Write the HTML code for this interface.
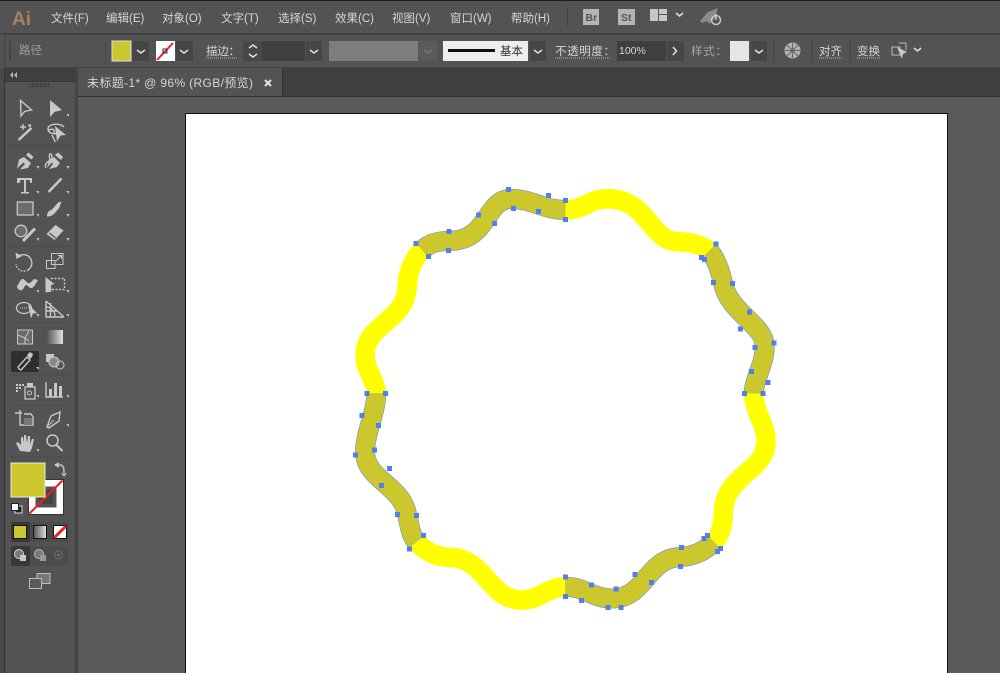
<!DOCTYPE html>
<html><head><meta charset="utf-8"><style>
html,body{margin:0;padding:0;background:#535353;width:1000px;height:673px;overflow:hidden}
svg{display:block}
text{font-family:"Liberation Sans","Noto Sans CJK SC",sans-serif;font-size:11.5px;fill:#d6d6d6}
.i{fill:none;stroke:#c8c8c8;stroke-width:1.4}
.f{fill:#c8c8c8}
.c{fill:none;stroke:#e0e0e0;stroke-width:1.5}
.u{stroke:#b5b5b5;stroke-width:1;stroke-dasharray:1 1}
</style></head><body>
<svg width="1000" height="673" viewBox="0 0 1000 673" xmlns="http://www.w3.org/2000/svg">
<rect width="1000" height="673" fill="#535353"/>
<rect width="1000" height="1" fill="#1c1c1c"/>
<rect x="0" y="33" width="1000" height="1" fill="#3e3e3e"/>
<rect x="4" y="34" width="996" height="1" fill="#444"/>
<rect x="4" y="67" width="996" height="1" fill="#444"/>
<rect x="4" y="34" width="1" height="34" fill="#444"/>

<!-- menu -->
<text x="12" y="25" style="font-size:19px;font-weight:bold;fill:#a87f60">Ai</text>
<text x="51" y="22">文件(F)</text><text x="106" y="22">编辑(E)</text><text x="162" y="22">对象(O)</text>
<text x="221" y="22">文字(T)</text><text x="278" y="22">选择(S)</text><text x="335" y="22">效果(C)</text>
<text x="392" y="22">视图(V)</text><text x="450" y="22">窗口(W)</text><text x="511" y="22">帮助(H)</text>
<rect x="567" y="7" width="1" height="19" fill="#444"/>
<rect x="583" y="9" width="16" height="16" fill="#b4b4b4"/><text x="585.500" y="21" style="font-size:10.500px;font-weight:bold;fill:#555">Br</text>
<rect x="618" y="9" width="17" height="16" fill="#b4b4b4"/><text x="621" y="21" style="font-size:10.500px;font-weight:bold;fill:#555">St</text>
<path class="f" d="M650 9h8v12h-8zM659 9h8v5h-8zM659 15h8v6h-8z"/>
<path class="c" d="M676 13l3.500 3 3.500-3"/>
<path fill="#8a8a8a" d="M700 21l8-9 10-4-3 10-6 6-2-3-5 2z"/>
<circle cx="716" cy="20" r="4.500" fill="none" stroke="#c9c9c9" stroke-width="1.500"/><path d="M716 14v6" stroke="#c9c9c9" stroke-width="1.500"/>

<!-- control bar -->
<rect x="9" y="41" width="2" height="20" fill="#444"/>
<text x="19" y="54" style="fill:#9c9c9c">路径</text>
<rect x="105" y="39" width="1" height="24" fill="#4a4a4a"/>
<rect x="112" y="41" width="19" height="20" fill="#cbc72d" stroke="#ddd" stroke-width="1"/>
<rect x="132" y="41" width="17" height="20" fill="#464646"/><path class="c" d="M137 50l4 3 4-3"/>
<rect x="156" y="41" width="19" height="20" fill="#fff"/><path d="M157 60L173 43" stroke="#e8242a" stroke-width="2"/><rect x="163" y="49" width="4" height="4" fill="none" stroke="#333"/>
<rect x="176" y="41" width="17" height="20" fill="#464646"/><path class="c" d="M180 50l4 3 4-3"/>
<text x="206" y="55" textLength="34">描边：</text><path class="u" d="M206 58h32"/>
<rect x="243" y="41" width="19" height="20" fill="#484848"/><path class="c" d="M249 48l4-3 4 3M249 54l4 3 4-3"/>
<rect x="262" y="41" width="43" height="20" fill="#3f3f3f"/>
<rect x="306" y="41" width="16" height="20" fill="#464646"/><path class="c" d="M310 50l4 3 4-3"/>
<rect x="329" y="41" width="89" height="20" fill="#7d7d7d"/>
<rect x="418" y="41" width="19" height="20" fill="#5a5a5a"/><path d="M424 50l4 3 4-3" fill="none" stroke="#777" stroke-width="1.500"/>
<rect x="443" y="41" width="85" height="20" fill="#eeeeee"/><rect x="448" y="49" width="47" height="3" fill="#111"/>
<text x="500" y="55" style="fill:#333">基本</text>
<rect x="530" y="41" width="16" height="20" fill="#464646"/><path class="c" d="M534 50l4 3 4-3"/>
<text x="555" y="55" textLength="60">不透明度：</text><path class="u" d="M555 58h56"/>
<rect x="617" y="41" width="49" height="20" fill="#3f3f3f"/><text x="619" y="54" style="font-size:10.500px">100%</text>
<rect x="667" y="41" width="17" height="20" fill="#464646"/><path class="c" d="M673 47l3.500 4-3.500 4"/>
<text x="691" y="55" textLength="36" style="fill:#a5a5a5">样式：</text>
<rect x="730" y="41" width="19" height="20" fill="#e6e6e6"/>
<rect x="751" y="41" width="16" height="20" fill="#464646"/><path class="c" d="M755 50l4 3 4-3"/>
<rect x="773" y="39" width="2" height="24" fill="#4a4a4a"/>
<circle cx="792.500" cy="50.500" r="8" fill="#b0b0b0"/><circle cx="792.500" cy="50.500" r="2" fill="#555"/><path d="M792.500 43v15M785 50.500h15M787 45l11 11M798 45l-11 11" stroke="#666" stroke-width="1"/>
<rect x="811" y="39" width="2" height="24" fill="#4a4a4a"/>
<text x="819" y="55">对齐</text><path class="u" d="M819 58h24"/>
<rect x="849" y="39" width="2" height="24" fill="#4a4a4a"/>
<text x="857" y="55">变换</text><path class="u" d="M857 58h24"/>
<path d="M892 47h8v8h-8zM899 43h7v7" fill="none" stroke="#bbb"/><path class="f" d="M897 47l10 5-4 2-1 5z"/>
<path class="c" d="M914 48l3.500 3 3.500-3"/>

<!-- tab bar -->
<rect x="4" y="68" width="996" height="29" fill="#3f3f3f"/>
<rect x="78" y="68" width="204" height="29" fill="#535353"/>
<rect x="282" y="68" width="1" height="29" fill="#333"/>
<text x="87" y="87" textLength="166" style="font-size:12px">未标题-1* @ 96% (RGB/预览)</text>
<path d="M265 80l6 6M271 80l-6 6" stroke="#e6e6e6" stroke-width="2"/>
<rect x="78" y="96" width="922" height="1" fill="#333"/>

<!-- canvas -->
<rect x="78" y="97" width="922" height="576" fill="#5a5a5a"/>
<rect x="185.500" y="113.500" width="762" height="565" fill="#fff" stroke="#111"/>

<!-- tool panel -->
<rect x="0" y="68" width="4" height="605" fill="#4a4a4a"/>
<rect x="4" y="68" width="1" height="605" fill="#333"/>
<rect x="5" y="68" width="70" height="605" fill="#535353"/>
<rect x="5" y="68" width="70" height="13" fill="#3f3f3f"/>
<rect x="5" y="81" width="70" height="1" fill="#383838"/>
<rect x="75" y="68" width="3" height="605" fill="#444"/>
<path d="M13 72l-3 3 3 3zM17 72l-3 3 3 3z" fill="#bbb"/>
<path d="M30 85h19" stroke="#3c3c3c" stroke-width="4" stroke-dasharray="1 1"/>
<path d="M10 146h60M10 246h60M10 323h60M10 375h60M10 405h60M10 457h60" stroke="#484848"/>

<!-- tools -->
<path class="i" d="M20.500 100.500l.5 15.500 3.500-4.500 7-1.500z"/>
<path class="f" d="M50 100v17l4.500-5 7.500-2z"/>
<path d="M18.500 140L31.500 128" stroke="#c8c8c8" stroke-width="2.500"/><path class="i" d="M23 124v6M20 127h6M30 124v3M28 125.500h3" stroke-width="1"/>
<path class="i" d="M64 127c-3-4-16-4-16 2 0 4 6 6 9 4M49 130c4-2 6 0 5 3M52 135c1 3 3 5 3 7" stroke-width="1.200"/><path class="f" d="M55 126l11 9-5.500.5-3.500 6z"/>

<path class="f" d="M17 168.500l2-9 5-2.500 7 6-3 5-8 1.500 5-5.500-1.500-1.500z"/><path class="f" d="M26 155l2.500-2.500 5 4.500-2 2.500z"/>
<path class="i" d="M46 168c-2-3 1-6 3-7 2-2-1-6 1-7 2-1 2 3 2 5" stroke-width="1.100"/><path class="f" d="M47 168l2-8 5-3 6 6-3 4-8 2 4-5-1.500-1.500z"/><path class="f" d="M55 155l3-2.500 5 4.500-2 3z"/>
<path class="f" d="M17 178h15v5h-1.500l-1-3h-3.500v12h3v1.500h-8V192h3V180h-3.500l-1 3H17z"/>
<path d="M48.500 192L61.500 178.500" stroke="#c8c8c8" stroke-width="2.500"/>
<rect x="17.300" y="202" width="15.700" height="13" fill="#6c6c6c" stroke="#c8c8c8" stroke-width="1.300"/>
<path class="f" d="M47 216.500c0-4 2-6 5-7l6-7 3.500-1-2 6-5 6c-2 2-4.500 3-7.500 3z"/>
<circle cx="21" cy="231" r="5.800" fill="#6c6c6c" stroke="#c8c8c8" stroke-width="1.300"/><path d="M23 241L35 228.500" stroke="#c8c8c8" stroke-width="3"/>
<path class="f" d="M46.500 234l9-9 8 5.500-9 9.500z"/><path d="M49.500 233l6 5" stroke="#535353" stroke-width="1.200"/>
<path class="i" d="M19 256a8 8 0 1 1 9 14"/><path class="i" stroke-dasharray="1.500 1.500" d="M28 270a8 8 0 0 1-12-6"/><path class="f" d="M15.500 252.500l1 6.500 5.500-3z"/>
<rect x="46.500" y="260.500" width="8.500" height="8" fill="none" stroke="#c8c8c8"/><rect x="51.500" y="253.500" width="11.500" height="11" fill="none" stroke="#c8c8c8"/><path d="M56 261l5-5M58 255.500h3.500v3.500" fill="none" stroke="#c8c8c8"/>
<path class="f" d="M17 286c2-2 3-6 5-7s4 3 6 4 4-2 6-4l4 1c-2 3-3 6-6 8-3 1-4-3-6-3-2 1-2 4-4 5s-5-1-5-4z"/>
<path class="i" stroke-dasharray="2 1.500" d="M51 278.500h13.500v11h-13.500"/><path class="f" d="M45.500 277l9 7-3.500 1 .5 6.500-6 1z"/>
<ellipse cx="24" cy="308" rx="7.500" ry="5.500" fill="none" stroke="#c8c8c8" stroke-width="1.300"/><path d="M20 308h7" stroke="#c8c8c8" stroke-dasharray="1 1"/><path class="f" d="M28 304l9 9-4 .5-2 5z"/>
<path class="i" d="M46 301v16h18M46 301l18 16M46 307c6 0 9 5 9 10M50.500 303v14M46 311h11" stroke-width="1"/>
<rect x="17.500" y="330" width="15" height="14" fill="#6a6a6a" stroke="#c8c8c8"/><path d="M18 335l7 3 4-7M25 338v6M25 338l4 3" fill="none" stroke="#c8c8c8"/>
<defs><linearGradient id="g"><stop offset="0" stop-color="#555"/><stop offset="1" stop-color="#e0e0e0"/></linearGradient></defs>
<rect x="47" y="330" width="16" height="14" fill="url(#g)"/>
<rect x="11" y="351" width="28" height="21" rx="2" fill="#2e2e2e"/>
<path class="i" d="M19 369l-1-2 9-10 3 3-9 10z"/><path class="f" d="M27 355l3-3 3 2-1 3-2 2z"/>
<rect x="46" y="354" width="8" height="8" class="f"/><circle cx="54" cy="362" r="5" fill="#888" stroke="#c8c8c8"/><circle cx="60" cy="365" r="4" fill="none" stroke="#c8c8c8"/>
<path d="M16 384h2v2h-2zM19 384h2v2h-2zM22 384h2v2h-2zM16 387h2v2h-2zM19 387h2v2h-2zM16 390h2v2h-2z" fill="#c8c8c8"/>
<rect x="25" y="387" width="10" height="12" fill="none" stroke="#c8c8c8" stroke-width="1.300"/><rect x="27" y="383" width="6" height="4" class="f"/><circle cx="29.500" cy="393" r="2" fill="none" stroke="#c8c8c8"/>
<path class="i" d="M46 382v15h17"/><path class="f" d="M49 389h3v8h-3zM54 383h3v14h-3zM59 386h3v11h-3z"/>
<path class="i" d="M15 413h7M20 410v7M24 414h7l2 3v8H20V417"/><rect x="24" y="418" width="8" height="7" fill="#777"/>
<path class="i" d="M47 427l4-11 9-4-1 9-10 7z"/><path d="M47 427l7-7" stroke="#c8c8c8"/>
<path class="f" d="M20 451l-4-8 2-1 3 3 0-8h2l1 6 0-8h2l1 8 1-7h2l0 8 2-5h2l-2 9-2 4z"/>
<circle cx="52.500" cy="440.500" r="5.500" fill="none" stroke="#c8c8c8" stroke-width="1.500"/><path d="M56.500 445l6 6" stroke="#c8c8c8" stroke-width="2"/>
<!-- flyout triangles -->
<path fill="#bdbdbd" d="M69 117v-3h-3zM39 169v-3h-3zM69 169v-3h-3zM39 194v-3h-3zM69 194v-3h-3zM39 217v-3h-3zM69 217v-3h-3zM39 241v-3h-3zM69 241v-3h-3zM39 293v-3h-3zM69 293v-3h-3zM39 317v-3h-3zM69 317v-3h-3zM39 370v-3h-3zM69 398v-3h-3zM39 398v-3h-3zM69 427v-3h-3zM39 452v-3h-3z"/>

<!-- fill & stroke -->
<rect x="32" y="483" width="28" height="28" fill="none" stroke="#fff" stroke-width="7"/>
<rect x="28.500" y="479.500" width="35" height="35" fill="none" stroke="#333" stroke-width="1"/>
<rect x="39" y="490" width="14" height="14" fill="#444"/>
<path d="M29.500 513.500L62.500 480.500" stroke="#ee1c24" stroke-width="2"/>
<rect x="11" y="463" width="34" height="34" fill="#cbc72d" stroke="#eaeaea" stroke-width="1"/>
<path class="i" d="M55 465l4-2M55 465l4 2M55 465h5c3 0 4 2 4 8M64 476l-2-3M64 476l2-3" stroke-width="1.300"/>
<rect x="15" y="506" width="7" height="7" fill="#222" stroke="#ddd"/><rect x="11.500" y="503.500" width="7" height="7" fill="#fff" stroke="#222"/>
<!-- color mode -->
<rect x="11" y="522" width="57" height="20" rx="2" fill="#4c4c4c"/>
<rect x="11" y="522" width="19" height="20" rx="2" fill="#383838"/>
<rect x="13.500" y="525.500" width="13" height="13" fill="#cbc72d" stroke="#111"/>
<rect x="33.500" y="525.500" width="13" height="13" fill="url(#g)" stroke="#111"/>
<rect x="53.500" y="525.500" width="13" height="13" fill="#fff" stroke="#111"/><path d="M54 538l12-12" stroke="#ee1c24" stroke-width="3"/>
<!-- draw mode -->
<rect x="11" y="546" width="57" height="20" rx="2" fill="#4c4c4c"/>
<rect x="11" y="546" width="19" height="20" rx="2" fill="#383838"/>
<circle cx="19" cy="554" r="4.500" fill="#777" stroke="#d8d8d8"/><rect x="20" y="555" width="6" height="6" class="f"/>
<circle cx="39" cy="554" r="4.500" fill="#777" stroke="#bbb"/><rect x="40" y="555" width="6" height="6" fill="#999"/>
<circle cx="58.500" cy="555" r="4" fill="none" stroke="#6f6f6f"/><circle cx="58.500" cy="555" r="1.500" fill="#6f6f6f"/>
<!-- screen mode -->
<rect x="37" y="573.500" width="13" height="10" fill="#777" stroke="#bbb"/>
<rect x="29.500" y="578.500" width="12" height="10" fill="#5a5a5a" stroke="#bbb"/>

<!-- artwork -->
<g fill="none" stroke-linecap="butt" stroke-linejoin="round">
<g stroke="#ffff00" stroke-width="19.500">
<path d="M565.300 210C585 210 588 198.700 608 198.700C648 198.700 650 241.700 678 241.700C690 241.700 702 245 709 251"/>
<path d="M753.700 393.300C753.700 412 766 423 766 441.700C766 472 723.300 475 723.300 513.300C723.300 525 720 536 714 542"/>
<path d="M565.300 586.700C548 586.700 540 600 521.700 600C488 600 486 557.300 448.300 557.300C436 557.300 424 550 416.500 542"/>
<path d="M376.300 393.300C376.300 381 365 371 365 355C365 323 407 322 407.300 285C407.500 272 414 258 422 250"/>
</g>
<g stroke="#6f90d6" stroke-width="20">
<path d="M709 251C716 258 720.500 272 723 283C728 311 765 326 764.500 345C766 362 754 378 753.700 393.300"/>
<path d="M714 542C706 550 695 556 681 557C646 558 646 598.500 612 598.500C592 598.500 585 586.700 565.300 586.700"/>
<path d="M416.500 542C410 534 410 525 407 515C403 486 366 480 365 452.500C365 433 376.300 412 376.300 393.300"/>
<path d="M422 250C430 243 438 241 448.700 241C489 241 485 199 511 199C533 199 543 210 565.300 210"/>
</g>
<g stroke="#cbc72d" stroke-width="18.800">
<path d="M709 251C716 258 720.500 272 723 283C728 311 765 326 764.500 345C766 362 754 378 753.700 393.300"/>
<path d="M714 542C706 550 695 556 681 557C646 558 646 598.500 612 598.500C592 598.500 585 586.700 565.300 586.700"/>
<path d="M416.500 542C410 534 410 525 407 515C403 486 366 480 365 452.500C365 433 376.300 412 376.300 393.300"/>
<path d="M422 250C430 243 438 241 448.700 241C489 241 485 199 511 199C533 199 543 210 565.300 210"/>
</g>
</g>
<path fill="#4f7ff0" d="M413.500 241h5v5h-5zM426 254h5v5h-5zM446.500 229h5v5h-5zM446 248h5v5h-5zM476 212.500h5v5h-5zM492 221h5v5h-5zM506 187h5v5h-5zM511 206h5v5h-5zM546 193h5v5h-5zM536 209h5v5h-5zM563 198h5v5h-5zM563 217h5v5h-5zM713.500 241.500h5v5h-5zM699 255h5v5h-5zM702 257h5v5h-5zM730 281h5v5h-5zM711 280h5v5h-5zM747 309.500h5v5h-5zM738 326.500h5v5h-5zM771.500 340.500h5v5h-5zM752.500 345h5v5h-5zM765.500 380h5v5h-5zM749 369h5v5h-5zM760.500 391h5v5h-5zM742 391h5v5h-5zM705 533h5v5h-5zM701.500 536h5v5h-5zM718 546h5v5h-5zM715 549h5v5h-5zM679 545h5v5h-5zM678 564h5v5h-5zM632.500 572h5v5h-5zM649 580h5v5h-5zM618.500 605h5v5h-5zM613.500 586.500h5v5h-5zM605.500 605h5v5h-5zM589 582.500h5v5h-5zM579 598h5v5h-5zM563 574.500h5v5h-5zM563 594h5v5h-5zM421 533h5v5h-5zM407 546.500h5v5h-5zM414 513h5v5h-5zM395 512h5v5h-5zM387 466h5v5h-5zM379 483h5v5h-5zM372 447.500h5v5h-5zM353 452.500h5v5h-5zM376 423h5v5h-5zM359.500 413h5v5h-5zM383 391h5v5h-5zM364.500 391h5v5h-5z"/>
</svg>
</body></html>
